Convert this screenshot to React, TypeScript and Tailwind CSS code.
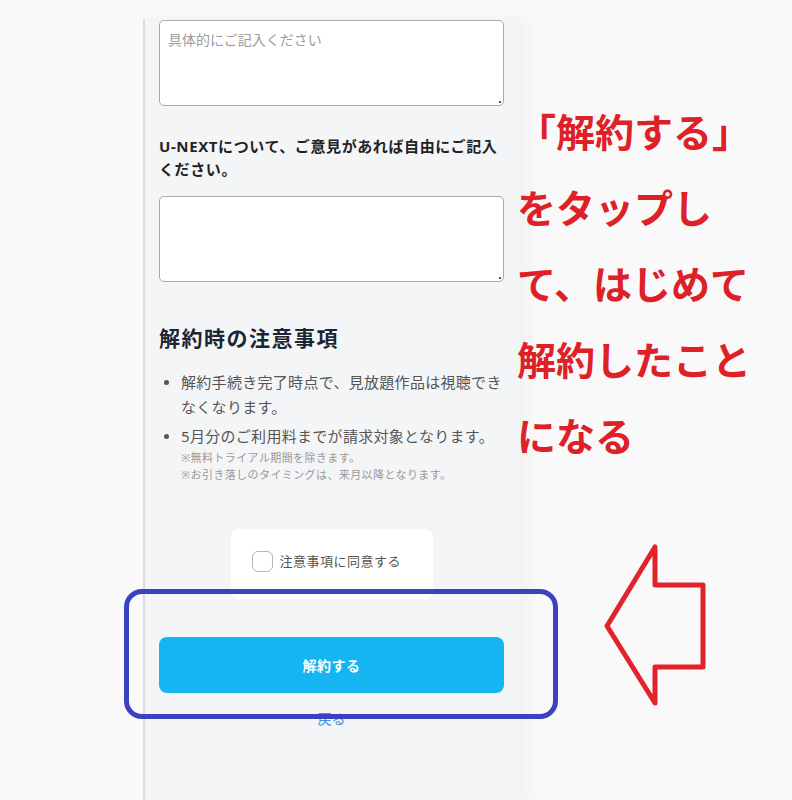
import React from "react"

const jp = { fontFamily: '"Noto Sans", "Noto Sans CJK JP", sans-serif' }

function Box(props: { placeholder?: string; className?: string }) {
    return (
        <div className={"relative " + (props.className ?? "")}>
            <textarea placeholder={props.placeholder} className="block w-full h-[86px] bg-white border-[1.5px] border-[#a8a8a8] rounded-[5px] px-[8px] py-[9px] text-[14px] leading-[20px] placeholder:text-[#9c9c9c] outline-none resize-none" style={jp} />
            <span className="absolute right-[3px] bottom-[3px] w-[2px] h-[2px] bg-[#555]" />
        </div>
    )
}

function Bullet() {
    return <span className="w-[22px] shrink-0 flex justify-start pl-[5px] pt-[10px]"><span className="w-[5px] h-[5px] rounded-full bg-[#555] block" /></span>
}

function Notes() {
    return (
        <div className="mt-[41px]">
            <div className="text-[21px] font-bold tracking-[1.5px] leading-[30px] text-[#1c2632]">解約時の注意事項</div>
            <ul className="mt-[17px] text-[15px] leading-[25px] tracking-[0.3px] text-[#555]">
                <li className="flex">
                    <Bullet />
                    <span>解約手続き完了時点で、見放題作品は視聴できなくなります。</span>
                </li>
                <li className="flex mt-[4px]">
                    <Bullet />
                    <div>
                        <div>5月分のご利用料までが請求対象となります。</div>
                        <div className="text-[11px] leading-[17px] text-[#999] tracking-[0.4px]">※無料トライアル期間を除きます。</div>
                        <div className="text-[11px] leading-[17px] text-[#999] tracking-[0.4px]">※お引き落しのタイミングは、来月以降となります。</div>
                    </div>
                </li>
            </ul>
        </div>
    )
}

function Panel() {
    return (
        <div className="w-[377px] mt-[19px] border-l-2 border-[#dcdde1] bg-[#f4f5f7] pl-[14px] pr-[16px] shadow-[8px_0_14px_rgba(0,0,0,0.035)]">
            <Box placeholder="具体的にご記入ください" className="mt-[1px]" />
            <div className="mt-[29px] text-[15px] font-bold leading-[23px] tracking-[0.6px] text-[#222]">U-NEXTについて、ご意見があれば自由にご記入ください。</div>
            <Box className="mt-[15px]" />
            <Notes />
            <div className="flex justify-center mt-[46px]">
                <div className="w-[202px] h-[70px] bg-white rounded-[8px] flex items-start pt-[22px] pl-[21px] gap-[7px]">
                    <span className="w-[21px] h-[21px] rounded-[6px] border-[1.5px] border-[#b5b5b5] bg-white" />
                    <span className="text-[13px] leading-[21px] text-[#555] tracking-[0.5px]">注意事項に同意する</span>
                </div>
            </div>
            <button className="mt-[38px] w-full h-[56px] rounded-[8px] bg-[#14b5f0] text-white text-[14px] font-bold tracking-[0.5px]">解約する</button>
            <div className="text-center mt-[16px] text-[14px] leading-[20px] text-[#4a90d9]">戻る</div>
            <div className="h-[200px]" />
        </div>
    )
}

function Annotation() {
    return (
        <div className="pt-[94px] -ml-[3px]">
            <div className="text-[39px] font-bold leading-[76px] text-[#dd2127] whitespace-nowrap">
                <div>「解約する」</div>
                <div>をタップし</div>
                <div>て、はじめて</div>
                <div>解約したこと</div>
                <div>になる</div>
            </div>
            <svg width="112" height="168" viewBox="0 0 112 168" className="mt-[67px] ml-[83px] block">
                <polygon points="7,85 55,6 55,44 103,44 103,126 55,126 55,162" fill="none" stroke="#e3232b" strokeWidth="5" strokeLinejoin="round" />
            </svg>
        </div>
    )
}

export default function App() {
    return (
        <div className="relative w-[792px] h-[800px] overflow-hidden bg-[#f9f9f9] flex" style={jp}>
            <div className="w-[143px] shrink-0" />
            <Panel />
            <Annotation />
            <div className="absolute left-[124px] top-[589px] w-[434px] h-[130px] border-[5px] border-[#3a42c2] rounded-[18px]" />
        </div>
    )
}
